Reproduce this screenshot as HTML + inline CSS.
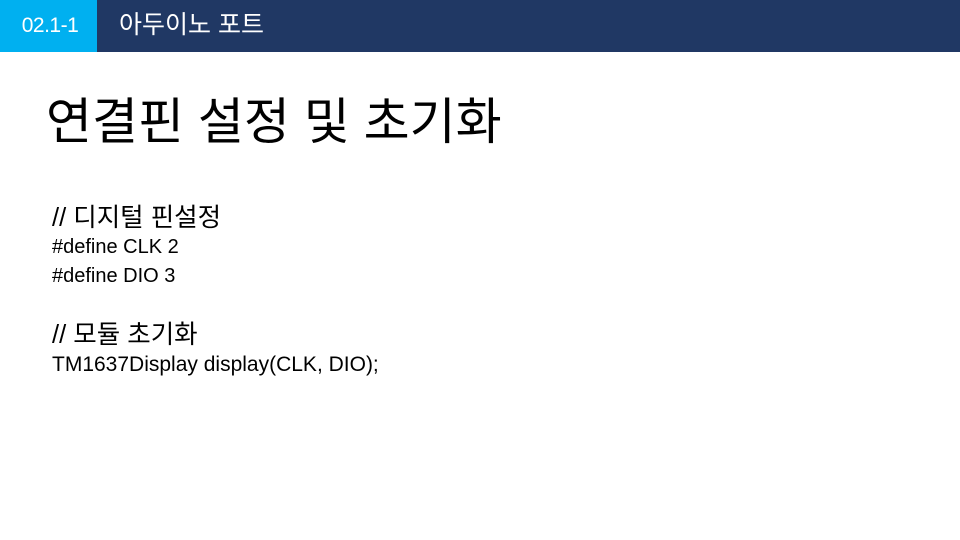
<!DOCTYPE html>
<html><head><meta charset="utf-8"><style>
body{margin:0;width:960px;height:540px;background:#fff;position:relative;overflow:hidden;font-family:"Liberation Sans","Noto Sans CJK KR",sans-serif;}
.bar{position:absolute;left:0;top:0;width:960px;height:52px;background:#203864;}
.num{position:absolute;left:0;top:0;width:100px;height:52px;color:#fff;font-size:21px;line-height:52px;text-align:center;letter-spacing:-0.5px;}
.numbg{position:absolute;left:0;top:0;width:97px;height:52px;background:#00b0f0;}
.t{position:absolute;left:119px;top:1px;line-height:48px;color:#fff;font-size:25px;}
h1{position:absolute;left:46px;top:90px;margin:0;font-weight:normal;font-size:50px;line-height:64px;color:#000;}
.body{position:absolute;left:52px;top:204px;font-size:20px;color:#000;line-height:29px;}
.body .k{font-size:25.5px;}
</style></head><body>
<div class="bar"></div><div class="numbg"></div><div class="num">02.1-1</div><div class="t">아두이노 포트</div>
<h1>연결핀 설정 및 초기화</h1>
<div class="body">
<div class="k">// 디지털 핀설정</div>
<div>#define CLK 2</div>
<div>#define DIO 3</div>
<div style="height:30px"></div>
<div class="k">// 모듈 초기화</div>
<div style="font-size:21px">TM1637Display display(CLK, DIO);</div>
</div>
</body></html>
